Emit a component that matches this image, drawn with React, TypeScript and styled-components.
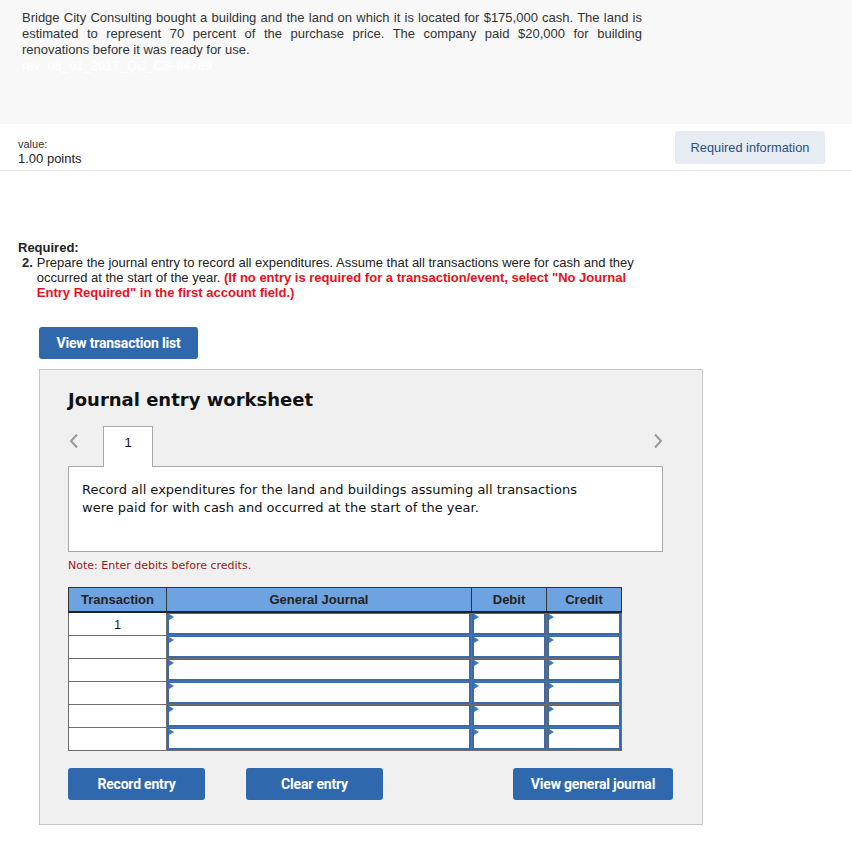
import React from "react";
import styled, { createGlobalStyle } from "styled-components";

const GlobalStyle = createGlobalStyle`
  body {
    margin: 0;
    background: #ffffff;
    font-family: "Liberation Sans", Arial, sans-serif;
    color: #222;
  }
`;

const rows = ["1", "", "", "", "", ""];

const Chevron = (props: { dir: "left" | "right" }) => (
  <svg width="10" height="16" viewBox="0 0 10 16">
    <path
      d={props.dir === "left" ? "M8 1.5 L2 8 L8 14.5" : "M2 1.5 L8 8 L2 14.5"}
      fill="none"
      stroke="#9a9a9a"
      strokeWidth="2"
    />
  </svg>
);

export default function App() {
  return (
    <>
      <GlobalStyle />
      <Problem>
        <ProblemText>
          Bridge City Consulting bought a building and the land on which it is located for
          $175,000 cash. The land is estimated to represent 70 percent of the purchase price.
          The company paid $20,000 for building renovations before it was ready for use.
        </ProblemText>
        <Rev>rev: 08_01_2017_QC_CS-94789</Rev>
      </Problem>

      <ValueBar>
        <div>
          <ValueLabel>value:</ValueLabel>
          <Points>1.00 points</Points>
        </div>
        <InfoButton>Required information</InfoButton>
      </ValueBar>

      <Required>
        <RequiredTitle>Required:</RequiredTitle>
        <Item>
          <ItemNum>2.</ItemNum>
          <span>
            Prepare the journal entry to record all expenditures. Assume that all transactions
            were for cash and they occurred at the start of the year.{" "}
            <Warn>
              (If no entry is required for a transaction/event, select "No Journal Entry
              Required" in the first account field.)
            </Warn>
          </span>
        </Item>
      </Required>

      <Main>
        <BlueButton width={159}>View transaction list</BlueButton>

        <Worksheet>
          <Title>Journal entry worksheet</Title>

          <TabRow>
            <Arrow side="left">
              <Chevron dir="left" />
            </Arrow>
            <Tab>1</Tab>
            <Spacer />
            <Arrow side="right">
              <Chevron dir="right" />
            </Arrow>
          </TabRow>

          <Description>
            Record all expenditures for the land and buildings assuming all transactions
            <br />
            were paid for with cash and occurred at the start of the year.
          </Description>

          <Note>Note: Enter debits before credits.</Note>

          <Journal>
            <colgroup>
              <col style={{ width: 98 }} />
              <col style={{ width: 305 }} />
              <col style={{ width: 75 }} />
              <col style={{ width: 75 }} />
            </colgroup>
            <thead>
              <tr>
                <Th>Transaction</Th>
                <Th>General Journal</Th>
                <Th>Debit</Th>
                <Th>Credit</Th>
              </tr>
            </thead>
            <tbody>
              {rows.map((r, i) => (
                <tr key={i}>
                  <TxCell>{r}</TxCell>
                  <Td>
                    <Field />
                  </Td>
                  <Td>
                    <Field />
                  </Td>
                  <Td>
                    <Field />
                  </Td>
                </tr>
              ))}
            </tbody>
          </Journal>

          <Actions>
            <BlueButton width={137}>Record entry</BlueButton>
            <BlueButton width={137}>Clear entry</BlueButton>
            <Spacer />
            <BlueButton width={160}>View general journal</BlueButton>
          </Actions>
        </Worksheet>
      </Main>
    </>
  );
}

const Problem = styled.div`
  background: #f8f8f8;
  height: 124px;
  box-sizing: border-box;
  padding: 10px 210px 0 22px;
`;

const ProblemText = styled.p`
  margin: 0;
  font-size: 13px;
  line-height: 16px;
  text-align: justify;
  color: #333;
`;

const Rev = styled.div`
  font-size: 13px;
  line-height: 16px;
  color: #ffffff;
`;

const ValueBar = styled.div`
  display: flex;
  justify-content: space-between;
  align-items: flex-start;
  padding: 7px 27px 3px 18px;
  border-bottom: 1px solid #e6e6e6;
`;

const ValueLabel = styled.div`
  font-size: 11px;
  line-height: 14px;
  margin-top: 6px;
  color: #333;
`;

const Points = styled.div`
  font-size: 13px;
  line-height: 16px;
  color: #222;
`;

const InfoButton = styled.div`
  background: #e6ecf2;
  color: #2b4f80;
  font-size: 12.8px;
  width: 150px;
  height: 33px;
  display: flex;
  align-items: center;
  justify-content: center;
  border-radius: 3px;
`;

const Required = styled.div`
  padding: 69px 20px 0 18px;
  font-size: 13px;
  line-height: 15px;
  color: #222;
  width: 620px;
`;

const RequiredTitle = styled.div`
  font-weight: bold;
`;

const Item = styled.div`
  display: flex;
  gap: 4px;
  padding-left: 4px;
`;

const ItemNum = styled.b`
  flex: none;
`;

const Warn = styled.b`
  color: #e8101c;
`;

const Main = styled.div`
  padding: 27px 0 40px 39px;
  display: flex;
  flex-direction: column;
  align-items: flex-start;
  gap: 10px;
`;

const BlueButton = styled.div<{ width: number }>`
  width: ${(p) => p.width}px;
  height: 32px;
  background: #3068ae;
  color: #fff;
  border-radius: 3px;
  font-family: Roboto, "Liberation Sans", sans-serif;
  font-weight: bold;
  font-size: 14px;
  letter-spacing: -0.2px;
  display: flex;
  align-items: center;
  justify-content: center;
  flex: none;
`;

const Worksheet = styled.div`
  width: 664px;
  box-sizing: border-box;
  background: #f0f0f0;
  border: 1px solid #c6c6c6;
  padding: 18px 40px 24px 28px;
  font-family: "DejaVu Sans", Verdana, sans-serif;
`;

const Title = styled.div`
  font-weight: bold;
  font-size: 18px;
  color: #111;
  line-height: 24px;
`;

const TabRow = styled.div`
  display: flex;
  align-items: center;
  margin-top: 14px;
  height: 41px;
  width: 595px;
  position: relative;
  z-index: 1;
  margin-bottom: -1px;
`;

const Arrow = styled.div<{ side: "left" | "right" }>`
  width: 35px;
  display: flex;
  align-items: center;
  justify-content: ${(p) => (p.side === "left" ? "flex-start" : "flex-end")};
  padding: ${(p) => (p.side === "left" ? "0 0 12px 1px" : "0 0 12px 0")};
  height: 100%;
  box-sizing: border-box;
`;

const Tab = styled.div`
  width: 50px;
  height: 41px;
  box-sizing: border-box;
  background: #fff;
  border: 1px solid #a8a8a8;
  border-bottom: none;
  font-family: "Liberation Sans", Arial, sans-serif;
  font-size: 13px;
  display: flex;
  justify-content: center;
  padding-top: 8px;
  color: #111;
`;

const Spacer = styled.div`
  flex: 1;
`;

const Description = styled.div`
  width: 595px;
  height: 86px;
  box-sizing: border-box;
  background: #fff;
  border: 1px solid #a8a8a8;
  padding: 14px 13px;
  font-size: 13px;
  line-height: 18px;
  color: #111;
`;

const Note = styled.div`
  margin-top: 7px;
  font-size: 11px;
  color: #9e1420;
  line-height: 14px;
`;

const Journal = styled.table`
  margin-top: 14px;
  border-collapse: collapse;
  width: 553px;
  table-layout: fixed;
  border: 1px solid #666;
  font-family: "Liberation Sans", Arial, sans-serif;
`;

const Th = styled.th`
  background: #6ea3e1;
  height: 23px;
  border: 1px solid #333;
  border-bottom: 2px solid #222;
  font-size: 13px;
  color: #222;
  padding: 0;
`;

const Td = styled.td`
  height: 22px;
  padding: 0;
  border: 1px solid #6e6e6e;
  background: #fff;
`;

const TxCell = styled(Td)`
  text-align: center;
  vertical-align: top;
  font-size: 12px;
  padding-top: 5px;
  height: 17px;
  color: #111;
`;

const Field = styled.div`
  height: 22px;
  box-sizing: border-box;
  border: 2px solid #3a6aa9;
  border-top-width: 1px;
  background: #fff;
  position: relative;

  &::before {
    content: "";
    position: absolute;
    left: 0;
    top: 0;
    border-top: 3px solid transparent;
    border-bottom: 3px solid transparent;
    border-left: 5px solid #3a78c8;
  }
`;

const Actions = styled.div`
  display: flex;
  margin-top: 17px;
  gap: 41px;
  width: 605px;
`;
